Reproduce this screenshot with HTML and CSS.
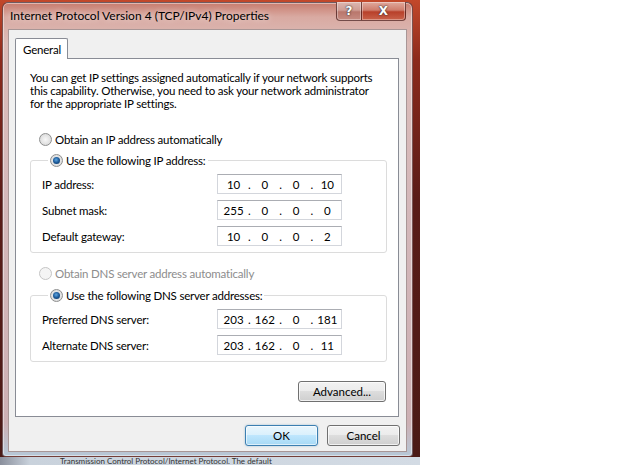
FILE: index.html
```html
<!DOCTYPE html>
<html>
<head>
  <title>Internet Protocol Version 4 (TCP/IPv4) Properties</title>
  <link rel="stylesheet" href="styles.css">
</head>
<body>
  <div class="desktop">
    <div class="window">
      <div class="titlebar">
        <span class="caption">Internet Protocol Version 4 (TCP/IPv4) Properties</span>
        <div class="caption-buttons">
          <span class="cap-btn help">?</span>
          <span class="cap-btn close">X</span>
        </div>
      </div>

      <div class="client">
        <div class="tabs">
          <span class="tab">General</span>
        </div>

        <div class="panel">
          <p class="intro">You can get IP settings assigned automatically if your network supports this capability. Otherwise, you need to ask your network administrator for the appropriate IP settings.</p>

          <div class="radio-row"><span class="radio"></span>Obtain an IP address automatically</div>

          <div class="group">
            <div class="radio-row legend"><span class="radio checked"></span>Use the following IP address:</div>
            <div class="fields">
              <div class="field-row">
                <label>IP address:</label>
                <div class="ip"><span>10</span><i>.</i><span>0</span><i>.</i><span>0</span><i>.</i><span>10</span></div>
              </div>
              <div class="field-row">
                <label>Subnet mask:</label>
                <div class="ip"><span>255</span><i>.</i><span>0</span><i>.</i><span>0</span><i>.</i><span>0</span></div>
              </div>
              <div class="field-row">
                <label>Default gateway:</label>
                <div class="ip"><span>10</span><i>.</i><span>0</span><i>.</i><span>0</span><i>.</i><span>2</span></div>
              </div>
            </div>
          </div>

          <div class="radio-row disabled"><span class="radio"></span>Obtain DNS server address automatically</div>

          <div class="group dns">
            <div class="radio-row legend"><span class="radio checked"></span>Use the following DNS server addresses:</div>
            <div class="fields">
              <div class="field-row">
                <label>Preferred DNS server:</label>
                <div class="ip"><span>203</span><i>.</i><span>162</span><i>.</i><span>0</span><i>.</i><span>181</span></div>
              </div>
              <div class="field-row">
                <label>Alternate DNS server:</label>
                <div class="ip"><span>203</span><i>.</i><span>162</span><i>.</i><span>0</span><i>.</i><span>11</span></div>
              </div>
            </div>
          </div>

          <div class="advanced-row">
            <button class="btn advanced">Advanced...</button>
          </div>
        </div>

        <div class="dialog-buttons">
          <button class="btn default">OK</button>
          <button class="btn">Cancel</button>
        </div>
      </div>
    </div>

    <div class="behind">Transmission Control Protocol/Internet Protocol. The default</div>
  </div>
</body>
</html>
```

FILE: styles.css
```css
body {
  margin: 0;
  background-color: #fff;
  font-family: Lato, "Noto Sans", sans-serif;
  font-size: 11.5px;
  letter-spacing: -0.2px;
  color: #000;
}

.desktop {
  width: 420px;
  height: 465px;
  overflow: hidden;
  background: linear-gradient(180deg, #c2482a 0, #8c2a1c 60px, #5a1c18 200px, #4a1a16 100%);
}

.window {
  width: 411px;
  height: 455px;
  margin: 2px 0 0 2px;
  padding: 0 6px 4px 6px;
  box-sizing: border-box;
  border: 1px solid rgba(60, 20, 20, 0.6);
  border-radius: 6px 6px 4px 4px;
  background: linear-gradient(180deg, #c87c6e 0, #d9aaa2 14px, #dcbcb8 40px, #d4b8ba 200px, #cdb0b4 420px, #b7c7d6 452px);
  box-shadow: inset 0 0 0 1px rgba(255, 255, 255, 0.45);
}

.titlebar {
  display: flex;
  height: 27px;
  margin-top: -1px;
}

.caption {
  padding-left: 1px;
  line-height: 28px;
  font-size: 12px;
  letter-spacing: 0;
  text-shadow: 0 0 6px rgba(255, 255, 255, 0.8);
}

.caption-buttons {
  display: flex;
  margin-left: auto;
  height: 19px;
}

.cap-btn {
  display: flex;
  align-items: center;
  justify-content: center;
  height: 18px;
  border: 1px solid rgba(70, 30, 30, 0.7);
  border-top: none;
  box-shadow: inset 0 0 0 1px rgba(255, 255, 255, 0.35);
  font-family: "DejaVu Sans", sans-serif;
  font-weight: bold;
  font-size: 12px;
  letter-spacing: 0;
  color: #fff;
  text-shadow: 0 0 1px #333, 0 0 2px #333;
}

.help {
  width: 24px;
  border-radius: 0 0 0 4px;
  border-right: none;
  background: linear-gradient(180deg, #dcb8b2 0, #cf9d94 45%, #b9776c 55%, #c68c82 100%);
}

.close {
  width: 43px;
  border-radius: 0 0 4px 0;
  background: linear-gradient(180deg, #e0aa9e 0, #cf7d6c 45%, #b8402a 55%, #c9624a 100%);
}

.client {
  width: 399px;
  height: 423px;
  box-sizing: border-box;
  padding: 8px 9px 7px 6px;
  background-color: #f0f0f0;
  border: 1px solid rgba(120, 90, 90, 0.6);
  margin-left: -1px;
}

.tabs {
  display: flex;
  height: 21px;
  margin-bottom: -1px;
  position: relative;
  z-index: 1;
}

.tab {
  display: flex;
  align-items: center;
  height: 21px;
  box-sizing: border-box;
  padding: 0 6px 0 7px;
  background-color: #fff;
  border: 1px solid #898c95;
  border-bottom: none;
  border-radius: 2px 2px 0 0;
}

.panel {
  display: flex;
  flex-direction: column;
  width: 384px;
  height: 359px;
  box-sizing: border-box;
  padding: 12px 11px 14px 14px;
  background-color: #fff;
  border: 1px solid #898c95;
}

.intro {
  max-width: 346px;
  margin: 0;
  line-height: 13px;
}

.radio-row {
  display: flex;
  align-items: center;
  height: 16px;
  margin: 21px 0 0 9px;
}

.radio {
  width: 13px;
  height: 13px;
  box-sizing: border-box;
  margin-right: 3px;
  border: 1px solid #8e8f8f;
  border-radius: 50%;
  background: radial-gradient(circle at 50% 50%, #f7f7f7 0, #dcdcdc 75%, #cacaca 100%);
  display: flex;
  align-items: center;
  justify-content: center;
}

.radio.checked::after {
  content: "";
  width: 7px;
  height: 7px;
  border-radius: 50%;
  background: radial-gradient(circle at 45% 40%, #5fa6e0 0, #1c5a99 50%, #0b2f57 100%);
}

.disabled {
  margin-top: 12px;
  color: #8d8d8d;
}

.disabled .radio {
  border-color: #c5c5c5;
  background: #f4f4f4;
}

.group {
  margin-top: 13px;
  padding: 0 0 6px 11px;
  border: 1px solid #dcdcdc;
  border-radius: 3px;
}

.group.dns {
  margin-top: 14px;
}

.legend {
  align-self: flex-start;
  width: fit-content;
  margin: -9px 0 0 6px;
  padding: 0 2px;
  background-color: #fff;
}

.fields {
  display: flex;
  flex-direction: column;
  gap: 6px;
  margin-top: 6px;
}

.field-row {
  display: flex;
  align-items: center;
  height: 20px;
}

.field-row label {
  width: 175px;
}

.ip {
  display: flex;
  align-items: center;
  width: 125px;
  height: 20px;
  box-sizing: border-box;
  padding-left: 2px;
  border: 1px solid #d3d6dc;
  border-top-color: #abadb3;
  background-color: #fff;
  letter-spacing: 0;
}

.ip span {
  flex: 1;
  text-align: center;
}

.ip i {
  width: 4px;
  font-style: normal;
  text-align: center;
}

.advanced-row {
  display: flex;
  justify-content: flex-end;
  margin-top: 19px;
}

.btn {
  width: 73px;
  height: 21px;
  padding: 0;
  font-family: inherit;
  font-size: 11.5px;
  letter-spacing: 0;
  color: #000;
  border: 1px solid #707070;
  border-radius: 3px;
  background: linear-gradient(180deg, #f2f2f2 0, #ebebeb 50%, #dddddd 50%, #cfcfcf 100%);
  box-shadow: inset 0 0 0 1px rgba(255, 255, 255, 0.7);
}

.btn.advanced {
  width: 88px;
  margin-right: 1px;
}

.btn.default {
  border-color: #3c7fb1;
  background: linear-gradient(180deg, #eaf6fd 0, #d9f0fc 50%, #bee6fd 50%, #a7d9f5 100%);
  box-shadow: inset 0 0 0 1px rgba(255, 255, 255, 0.6), 0 0 2px rgba(60, 127, 177, 0.5);
}

.dialog-buttons {
  display: flex;
  justify-content: flex-end;
  gap: 9px;
  width: 385px;
  margin-top: 8px;
}

.behind {
  height: 9px;
  padding: 0 0 0 60px;
  background: linear-gradient(90deg, #8a8f9c 0, #c9d2dc 30px, #d3dbe4 100%);
  color: #333;
  font-size: 8px;
  letter-spacing: 0;
  line-height: 9px;
  white-space: nowrap;
}
```
